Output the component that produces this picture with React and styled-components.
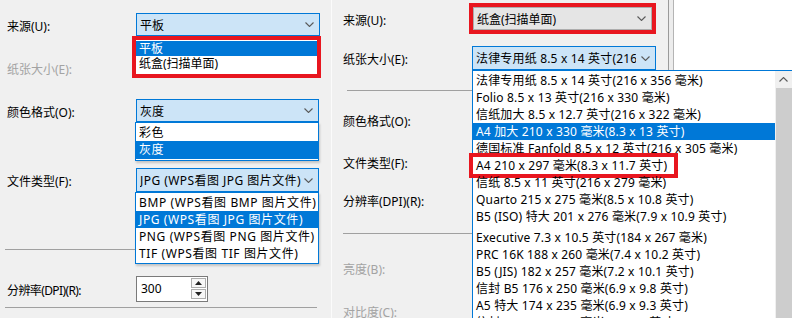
import React from "react";
import styled, { createGlobalStyle } from "styled-components";

const Global = createGlobalStyle`
  html, body { margin: 0; padding: 0; background: #f0f0f0; }
  body {
    font-family: "Noto Sans", "Noto Sans CJK SC", sans-serif;
    font-size: 12px;
    color: #000;
  }
`;

const BLUE = "#0078d7";
const RED = "#e8161f";

const Screen = styled.div`
  display: flex;
  width: 792px;
  height: 318px;
  overflow: hidden;
  background: #f0f0f0;
  position: relative;
`;

const LeftPanel = styled.div`
  width: 331px;
  flex: none;
  display: flex;
  flex-direction: column;
`;

const Seam = styled.div`
  width: 1px;
  flex: none;
  background: #fbfbfb;
`;

const RightPanel = styled.div`
  flex: 1;
  display: flex;
`;

const RightForm = styled.div`
  width: 336px;
  flex: none;
  display: flex;
  flex-direction: column;
`;

const WindowEdge = styled.div`
  width: 4px;
  flex: none;
  border-left: 1px solid #9a9a9a;
  border-right: 1px solid #b4b4b4;
  background: #ececec;
`;

const WhitePane = styled.div`
  flex: 1;
  background: #fff;
`;

const Row = styled.div`
  display: flex;
  align-items: center;
  flex: none;
  height: ${(p) => p.h}px;
  margin-top: ${(p) => p.mt}px;
  padding-left: ${(p) => p.pl}px;
`;

const Label = styled.div`
  width: 129px;
  flex: none;
  white-space: nowrap;
  color: ${(p) => (p.disabled ? "#a3a3a3" : "#000")};
  letter-spacing: ${(p) => (p.condensed ? "-0.6px" : "0")};
  padding-top: 2px;
`;

const Field = styled.div`
  position: relative;
  height: 100%;
  display: flex;
`;

const Select = styled.div`
  box-sizing: border-box;
  display: flex;
  align-items: center;
  width: ${(p) => p.w}px;
  height: 100%;
  padding: 0 5px 0 3px;
  border: 1px solid ${(p) => (p.focused ? BLUE : "#adadad")};
  background: ${(p) => (p.focused ? "#cce4f7" : "#e5e5e5")};
`;

const SelectText = styled.span`
  flex: 1;
  min-width: 0;
  overflow: hidden;
  white-space: nowrap;
  letter-spacing: ${(p) => p.ls || 0}px;
  margin-right: ${(p) => (p.tight ? 1 : 5)}px;
`;

const RedFrame = styled.div`
  box-sizing: border-box;
  display: flex;
  height: 100%;
  width: 187px;
  margin-left: -3px;
  border: 4px solid ${RED};
`;

const DropList = styled.div`
  position: absolute;
  z-index: 10;
  top: 100%;
  left: ${(p) => p.left}px;
  width: ${(p) => p.w}px;
  box-sizing: border-box;
  background: #fff;
  border: 1px solid ${BLUE};
  padding: 1px 0;
  letter-spacing: 0.6px;
  box-shadow: 1px 2px 2px rgba(0, 0, 0, 0.18);
`;

const AnnotatedList = styled.div`
  position: absolute;
  z-index: 10;
  top: 100%;
  left: -4px;
  width: 189px;
  height: 42px;
  box-sizing: border-box;
  border: 4px solid ${RED};
  background: #fff;
  padding-top: 1px;
`;

const Option = styled.div`
  position: relative;
  height: ${(p) => p.h}px;
  line-height: ${(p) => p.h}px;
  margin-top: ${(p) => p.mt || 0}px;
  padding-left: 3px;
  white-space: nowrap;
  background: ${(p) => (p.selected ? BLUE : "transparent")};
  color: ${(p) => (p.selected ? "#fff" : "#000")};
`;

const OptionMark = styled.div`
  position: absolute;
  top: -4px;
  bottom: -4px;
  left: -4px;
  width: 209px;
  box-sizing: border-box;
  border: 4px solid ${RED};
`;

const WideList = styled.div`
  position: absolute;
  z-index: 10;
  top: 100%;
  left: 0;
  width: 320px;
  height: 260px;
  box-sizing: border-box;
  display: flex;
  background: #fff;
  border-top: 1px solid ${BLUE};
  border-left: 1px solid ${BLUE};
  letter-spacing: 0.17px;
`;

const WideItems = styled.div`
  flex: 1;
  padding-top: 1px;
`;

const ScrollBar = styled.div`
  width: 17px;
  flex: none;
  display: flex;
  flex-direction: column;
  background: #f0f0f0;
`;

const ScrollArrow = styled.div`
  height: 17px;
  display: flex;
  align-items: center;
  justify-content: center;
`;

const ScrollThumb = styled.div`
  flex: 1;
  margin: 0 0 0 1px;
  background: #cdcdcd;
`;

const Sep = styled.div`
  flex: none;
  height: 1px;
  background: #a0a0a0;
  margin-top: ${(p) => p.mt}px;
  margin-left: ${(p) => p.ml}px;
  width: ${(p) => p.w}px;
`;

const SpinBox = styled.div`
  box-sizing: border-box;
  width: 72px;
  height: 100%;
  display: flex;
  align-items: center;
  padding-left: 4px;
  background: #fff;
  border: 1px solid #7a7a7a;
`;

const SpinValue = styled.span`
  flex: 1;
  margin-top: -2px;
`;

const SpinButtons = styled.div`
  display: flex;
  flex-direction: column;
  gap: 1px;
  width: 15px;
  margin-right: 1px;
  align-self: flex-start;
  margin-top: 1px;
`;

const SpinButton = styled.div`
  box-sizing: border-box;
  height: 10px;
  display: flex;
  align-items: center;
  justify-content: center;
  border: 1px solid #adadad;
  background: #f7f7f7;
`;

const Chevron = ({ up }) => (
  <svg width="9" height="5" viewBox="0 0 9 5" style={{ flex: "none" }}>
    <path
      d={up ? "M0.5 4.5 L4.5 0.5 L8.5 4.5" : "M0.5 0.5 L4.5 4.5 L8.5 0.5"}
      stroke="#5a5a5a"
      strokeWidth="1.1"
      fill="none"
    />
  </svg>
);

const Tri = ({ up }) => (
  <svg width="7" height="4" viewBox="0 0 7 4">
    <path d={up ? "M0 4 L3.5 0 L7 4 Z" : "M0 0 L3.5 4 L7 0 Z"} fill="#222" />
  </svg>
);

const paperSizes = [
  "法律专用纸 8.5 x 14 英寸(216 x 356 毫米)",
  "Folio 8.5 x 13 英寸(216 x 330 毫米)",
  "信纸加大 8.5 x 12.7 英寸(216 x 322 毫米)",
  "A4 加大 210 x 330 毫米(8.3 x 13 英寸)",
  "德国标准 Fanfold 8.5 x 12 英寸(216 x 305 毫米)",
  "A4 210 x 297 毫米(8.3 x 11.7 英寸)",
  "信纸 8.5 x 11 英寸(216 x 279 毫米)",
  "Quarto 215 x 275 毫米(8.5 x 10.8 英寸)",
  "B5 (ISO) 特大 201 x 276 毫米(7.9 x 10.9 英寸)",
  "Executive 7.3 x 10.5 英寸(184 x 267 毫米)",
  "PRC 16K 188 x 260 毫米(7.4 x 10.2 英寸)",
  "B5 (JIS) 182 x 257 毫米(7.2 x 10.1 英寸)",
  "信封 B5 176 x 250 毫米(6.9 x 9.8 英寸)",
  "A5 特大 174 x 235 毫米(6.9 x 9.3 英寸)",
  "信封 C5 162 x 229 毫米(6.4 x 9 英寸)",
];

const fileTypes = [
  "BMP (WPS看图 BMP 图片文件)",
  "JPG (WPS看图 JPG 图片文件)",
  "PNG (WPS看图 PNG 图片文件)",
  "TIF (WPS看图 TIF 图片文件)",
];

export default function App() {
  return (
    <>
      <Global />
      <Screen>
        <LeftPanel>
          <Row h={23} mt={13} pl={7}>
            <Label>来源(U):</Label>
            <Field>
              <Select w={184} focused>
                <SelectText>平板</SelectText>
                <Chevron />
              </Select>
              <AnnotatedList>
                <Option h={15} selected>平板</Option>
                <Option h={15}>纸盒(扫描单面)</Option>
              </AnnotatedList>
            </Field>
          </Row>
          <Row h={23} mt={20} pl={7}>
            <Label disabled>纸张大小(E):</Label>
          </Row>
          <Row h={23} mt={20} pl={7}>
            <Label>颜色格式(O):</Label>
            <Field>
              <Select w={183} focused>
                <SelectText>灰度</SelectText>
                <Chevron />
              </Select>
              <DropList left={-1} w={184}>
                <Option h={17}>彩色</Option>
                <Option h={18} selected>灰度</Option>
              </DropList>
            </Field>
          </Row>
          <Row h={24} mt={46} pl={7}>
            <Label>文件类型(F):</Label>
            <Field>
              <Select w={183} focused>
                <SelectText ls={0.45} tight>
                  JPG (WPS看图 JPG 图片文件)
                </SelectText>
                <Chevron />
              </Select>
              <DropList left={-1} w={184}>
                {fileTypes.map((t, i) => (
                  <Option key={t} h={17} selected={i === 1}>
                    {t}
                  </Option>
                ))}
              </DropList>
            </Field>
          </Row>
          <Sep mt={57} ml={5} w={312} />
          <Row h={26} mt={26} pl={7}>
            <Label condensed>分辨率(DPI)(R):</Label>
            <Field>
              <SpinBox>
                <SpinValue>300</SpinValue>
                <SpinButtons>
                  <SpinButton>
                    <Tri up />
                  </SpinButton>
                  <SpinButton>
                    <Tri />
                  </SpinButton>
                </SpinButtons>
              </SpinBox>
            </Field>
          </Row>
          <Sep mt={5} ml={5} w={312} />
        </LeftPanel>
        <Seam />
        <RightPanel>
          <RightForm>
            <Row h={31} mt={3} pl={11}>
              <Label>来源(U):</Label>
              <Field>
                <RedFrame>
                  <Select w={179}>
                    <SelectText>纸盒(扫描单面)</SelectText>
                    <Chevron />
                  </Select>
                </RedFrame>
              </Field>
            </Row>
            <Row h={24} mt={12} pl={11}>
              <Label>纸张大小(E):</Label>
              <Field>
                <Select w={184} focused>
                  <SelectText ls={0.17}>法律专用纸 8.5 x 14 英寸(216 x 356 毫米)</SelectText>
                  <Chevron />
                </Select>
                <WideList>
                  <WideItems>
                    {paperSizes.map((t, i) => (
                      <Option key={t} h={17} mt={i === 9 ? 4 : 0} selected={i === 3}>
                        {t}
                        {i === 5 && <OptionMark />}
                      </Option>
                    ))}
                  </WideItems>
                  <ScrollBar>
                    <ScrollArrow>
                      <Chevron up />
                    </ScrollArrow>
                    <ScrollThumb />
                  </ScrollBar>
                </WideList>
              </Field>
            </Row>
            <Sep mt={20} ml={15} w={309} />
            <Row h={24} mt={17} pl={11}>
              <Label>颜色格式(O):</Label>
            </Row>
            <Row h={24} mt={18} pl={11}>
              <Label>文件类型(F):</Label>
            </Row>
            <Row h={24} mt={14} pl={11}>
              <Label>分辨率(DPI)(R):</Label>
            </Row>
            <Sep mt={21} ml={11} w={313} />
            <Row h={24} mt={22} pl={11}>
              <Label disabled>亮度(B):</Label>
            </Row>
            <Row h={24} mt={19} pl={11}>
              <Label disabled>对比度(C):</Label>
            </Row>
          </RightForm>
          <WindowEdge />
          <WhitePane />
        </RightPanel>
      </Screen>
    </>
  );
}
